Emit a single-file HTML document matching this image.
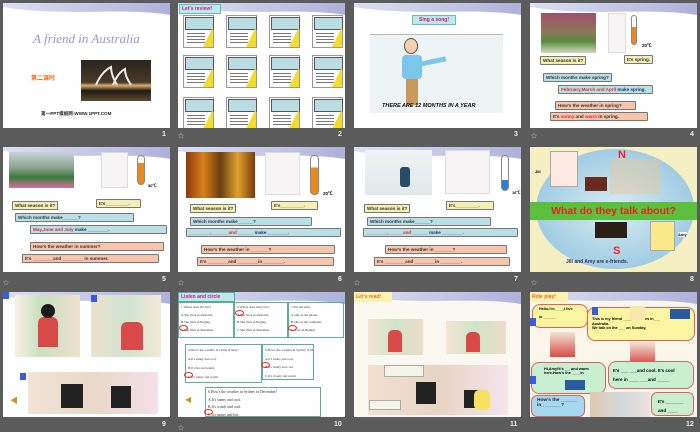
<!DOCTYPE html>
<html><head><meta charset="utf-8"><style>
*{margin:0;padding:0;box-sizing:border-box}
body{width:700px;height:431px;background:#5b5b5b;position:relative;overflow:hidden;font-family:"Liberation Sans","Noto Sans CJK SC",sans-serif}
.s{position:absolute;width:167px;height:125px;background:#fff;overflow:hidden}
.a{position:absolute}
.n{position:absolute;color:#eee;font-size:7px;font-weight:bold}
.st{position:absolute;color:#ccc;font-size:6px}
.b{position:absolute;font-size:4.6px;font-weight:bold;color:#333;border:1px solid #777;border-radius:1px;padding:0 2px;line-height:7px;white-space:nowrap}
.y{background:#f4efb4}.bl{background:#b9e0e6}.p{background:#f8c4ac}
.r{color:#e22}.nb{color:#236}
.cal{position:absolute;width:31px;height:33px;background:#fff;border:1px solid #999}
.cal:before{content:"";position:absolute;left:1px;top:1px;width:27px;height:11px;background:#b9dde0;border:1px solid #556}
.cal:after{content:"";position:absolute;right:0;bottom:0;border-left:10px solid transparent;border-bottom:20px solid #f4dc2a}
.cal i{position:absolute;left:3px;top:15px;width:18px;height:14px;background:repeating-linear-gradient(#fff 0 2px,#777 2px 3px)}
.ph{position:absolute}
.q{position:absolute;border:1px solid #5ab09a;padding:1px 2px;overflow:hidden;white-space:nowrap}
</style></head><body>
<svg width="0" height="0" style="position:absolute"><defs><linearGradient id="w" x1="0" x2="1"><stop offset="0" stop-color="#dcdff2"/><stop offset="1" stop-color="#aeb2dc"/></linearGradient></defs></svg>

<!-- Slide 1 -->
<div class="s" style="left:3px;top:3px">
<svg class="a" width="167" height="14" style="left:0;top:0"><path d="M0 0H167V12C120 4 60 14 0 4Z" fill="url(#w)"/></svg>
<div class="a" style="left:30px;top:28px;font:italic 13px 'Liberation Serif',serif;color:#9a9ac6">A friend in Australia</div>
<div class="a" style="left:28px;top:70px;font-size:6px;font-weight:bold;color:#f06a1a">第二课时</div>
<div class="ph" style="left:78px;top:57px;width:70px;height:41px;background:linear-gradient(#2a2420,#4a3a28 55%,#d8b070 62%,#201a14 75%,#5a4a30)"></div>
<svg class="a" style="left:88px;top:60px" width="50" height="22"><path d="M5 22C10 10 16 6 20 4C20 12 24 18 26 22M22 22C26 12 30 8 34 6C34 14 38 18 40 22" stroke="#eee" stroke-width="2" fill="none"/></svg>
<div class="a" style="left:38px;top:108px;font-size:4.6px;font-weight:bold;color:#222">第一PPT模板网-WWW.1PPT.COM</div>
</div>
<div class="n" style="left:162px;top:131px">1</div>

<!-- Slide 2 -->
<div class="s" style="left:178px;top:3px">
<svg class="a" width="167" height="14" style="left:0;top:0"><path d="M0 0H167V12C120 4 60 14 0 4Z" fill="url(#w)"/></svg>
<div class="a" style="left:1px;top:1px;width:42px;height:10px;background:#bfe8ec;border:1px solid #6bb;font-size:5px;font-weight:bold;color:#d0168e;line-height:8px;padding-left:2px">Let's review!</div>
<div class="cal" style="left:5px;top:12px"><i></i></div><div class="cal" style="left:48px;top:12px"><i></i></div><div class="cal" style="left:91px;top:12px"><i></i></div><div class="cal" style="left:134px;top:12px"><i></i></div>
<div class="cal" style="left:5px;top:52px"><i></i></div><div class="cal" style="left:48px;top:52px"><i></i></div><div class="cal" style="left:91px;top:52px"><i></i></div><div class="cal" style="left:134px;top:52px"><i></i></div>
<div class="cal" style="left:5px;top:94px"><i></i></div><div class="cal" style="left:48px;top:94px"><i></i></div><div class="cal" style="left:91px;top:94px"><i></i></div><div class="cal" style="left:134px;top:94px"><i></i></div>
</div>
<div class="st" style="left:178px;top:131px">☆</div><div class="n" style="left:338px;top:131px">2</div>

<!-- Slide 3 -->
<div class="s" style="left:354px;top:3px">
<svg class="a" width="167" height="14" style="left:0;top:0"><path d="M0 0H167V12C120 4 60 14 0 4Z" fill="url(#w)"/></svg>
<div class="a" style="left:58px;top:12px;width:44px;height:10px;background:#bfe8ec;border:1px solid #6bb;font-size:5px;font-weight:bold;color:#d0168e;line-height:8px;text-align:center">Sing a song!</div>
<div class="a" style="left:16px;top:31px;width:133px;height:79px;background:#eef3f6;border-top:1px solid #bbb"></div>
<div class="a" style="left:50px;top:35px;width:14px;height:16px;border-radius:50%;background:#f3d0b0;border:1px solid #555"></div>
<div class="a" style="left:48px;top:52px;width:20px;height:24px;background:#7cc6ea;border-radius:4px"></div>
<div class="a" style="left:66px;top:56px;width:26px;height:5px;background:#7cc6ea;transform:rotate(-12deg)"></div>
<div class="a" style="left:52px;top:76px;width:12px;height:26px;background:#c89a5a"></div>
<div class="a" style="left:28px;top:100px;font:italic bold 5.5px 'Liberation Sans',sans-serif;color:#111">THERE ARE 12 MONTHS IN A YEAR</div>
</div>
<div class="n" style="left:514px;top:131px">3</div>

<!-- Slide 4 -->
<div class="s" style="left:530px;top:3px">
<svg class="a" width="167" height="14" style="left:0;top:0"><path d="M0 0H167V12C120 4 60 14 0 4Z" fill="url(#w)"/></svg>
<div class="ph" style="left:11px;top:10px;width:55px;height:40px;background:linear-gradient(#a0506a,#8a7a5a 50%,#5a8a3a 70%,#cfd8c0)"></div>
<div class="a" style="left:78px;top:10px;width:18px;height:40px;background:#f6f4f4;border:1px solid #ddd"></div>
<div class="a" style="left:101px;top:12px;width:6px;height:30px;border:1px solid #888;border-radius:3px;background:linear-gradient(#fff 40%,#e88a20 40%)"></div>
<div class="a" style="left:112px;top:40px;font-size:4.5px;font-weight:bold">20℃</div>
<div class="b y" style="left:10px;top:53px">What season is it?</div>
<div class="b y" style="left:94px;top:52px">It's spring.</div>
<div class="b bl" style="left:13px;top:70px">Which months make spring?</div>
<div class="b bl" style="left:28px;top:82px;width:95px"><span class="r">February,March and April</span> <span class="nb">make spring.</span></div>
<div class="b p" style="left:25px;top:98px;width:81px">How's the weather in spring?</div>
<div class="b p" style="left:20px;top:109px;width:98px">It's <span class="r">sunny</span> and <span class="r">warm</span> in spring.</div>
</div>
<div class="st" style="left:531px;top:131px">☆</div><div class="n" style="left:690px;top:131px">4</div>

<!-- Slide 5 -->
<div class="s" style="left:3px;top:147px">
<svg class="a" width="167" height="14" style="left:0;top:0"><path d="M0 0H167V12C120 4 60 14 0 4Z" fill="url(#w)"/></svg>
<div class="ph" style="left:6px;top:5px;width:65px;height:36px;background:linear-gradient(#c8d4dc,#8aa08a 45%,#3a7a3a 70%,#d870a0)"></div>
<div class="a" style="left:98px;top:5px;width:27px;height:36px;background:#f6f4f4;border:1px solid #ddd"></div>
<div class="a" style="left:134px;top:8px;width:8px;height:30px;border:1px solid #888;border-radius:4px;background:linear-gradient(#fff 25%,#e88a20 25%)"></div>
<div class="a" style="left:145px;top:36px;font-size:4px;font-weight:bold">30℃</div>
<div class="b y" style="left:9px;top:54px">What season is it?</div>
<div class="b y" style="left:93px;top:52px;width:45px">It's_________.</div>
<div class="b bl" style="left:12px;top:66px;width:119px">Which months make______?</div>
<div class="b bl" style="left:27px;top:78px;width:137px"><span class="r">May,June and July</span> <span class="nb">make</span> ________.</div>
<div class="b p" style="left:27px;top:95px;width:134px">How's the weather in summer?</div>
<div class="b p" style="left:19px;top:107px;width:137px">It's ________and ________ in summer.</div>
</div>
<div class="st" style="left:3px;top:278px">☆</div><div class="n" style="left:162px;top:276px">5</div>

<!-- Slide 6 -->
<div class="s" style="left:178px;top:147px">
<svg class="a" width="167" height="14" style="left:0;top:0"><path d="M0 0H167V12C120 4 60 14 0 4Z" fill="url(#w)"/></svg>
<div class="ph" style="left:8px;top:5px;width:69px;height:46px;background:linear-gradient(90deg,#8a3a10,#d8801a,#6a4010,#e0a030,#7a3a0a)"></div>
<div class="a" style="left:87px;top:5px;width:35px;height:43px;background:#f6f4f4;border:1px solid #ddd"></div>
<div class="a" style="left:132px;top:8px;width:9px;height:40px;border:1px solid #888;border-radius:4px;background:linear-gradient(#fff 30%,#e88a20 30%)"></div>
<div class="a" style="left:145px;top:44px;font-size:4.5px;font-weight:bold">20℃</div>
<div class="b y" style="left:12px;top:57px">What season is it?</div>
<div class="b y" style="left:93px;top:54px;width:47px">It's_________.</div>
<div class="b bl" style="left:12px;top:70px;width:122px">Which months make______?</div>
<div class="b bl" style="left:8px;top:81px;width:155px;color:#e22">________,_______and ______ <span class="nb">make</span> <span style="color:#333">________.</span></div>
<div class="b p" style="left:23px;top:98px;width:134px">How's the weather in _______?</div>
<div class="b p" style="left:19px;top:110px;width:137px">It's ________and ________in ________.</div>
</div>
<div class="st" style="left:178px;top:278px">☆</div><div class="n" style="left:338px;top:276px">6</div>

<!-- Slide 7 -->
<div class="s" style="left:354px;top:147px">
<svg class="a" width="167" height="14" style="left:0;top:0"><path d="M0 0H167V12C120 4 60 14 0 4Z" fill="url(#w)"/></svg>
<div class="ph" style="left:11px;top:3px;width:67px;height:45px;background:linear-gradient(#f0f4f4,#e0e8ea)"></div>
<div class="a" style="left:46px;top:20px;width:10px;height:20px;background:#2a4a6a;border-radius:3px"></div>
<div class="a" style="left:91px;top:3px;width:45px;height:44px;background:#f6f4f4;border:1px solid #ddd"></div>
<div class="a" style="left:147px;top:8px;width:8px;height:36px;border:1px solid #888;border-radius:4px;background:linear-gradient(#fff 70%,#2a80d0 70%)"></div>
<div class="a" style="left:158px;top:43px;font-size:4px;font-weight:bold">16℃</div>
<div class="b y" style="left:10px;top:57px">What season is it?</div>
<div class="b y" style="left:92px;top:54px;width:48px">It's_________.</div>
<div class="b bl" style="left:13px;top:70px;width:124px">Which months make______?</div>
<div class="b bl" style="left:9px;top:81px;width:155px;color:#e22">________,______and ______ <span class="nb">make</span> <span style="color:#333">________.</span></div>
<div class="b p" style="left:31px;top:98px;width:122px">How's the weather in _______?</div>
<div class="b p" style="left:20px;top:110px;width:136px">It's ________and ________in ________.</div>
</div>
<div class="st" style="left:354px;top:278px">☆</div><div class="n" style="left:514px;top:276px">7</div>

<!-- Slide 8 -->
<div class="s" style="left:530px;top:147px;background:#f4f0c4">
<div class="a" style="left:6px;top:2px;width:158px;height:120px;border-radius:50%;background:radial-gradient(#d8ecf4,#8ac0dc)"></div>
<div class="a" style="left:80px;top:12px;width:50px;height:35px;background:#e8c8a0;opacity:.5"></div>
<div class="a" style="left:20px;top:4px;width:28px;height:36px;background:#fbe8e0;border:1px solid #aaa"></div>
<div class="a" style="left:5px;top:22px;font-size:4px;font-weight:bold">Jill</div>
<div class="a" style="left:55px;top:30px;width:22px;height:14px;background:#6a2a20"></div>
<div class="a" style="left:88px;top:2px;font-size:11px;font-weight:bold;color:#e22">N</div>
<div class="a" style="left:0;top:55px;width:167px;height:18px;background:#5cbf3e;color:#e8221a;font-size:10.5px;font-weight:bold;text-align:center;line-height:18px">What do they talk about?</div>
<div class="a" style="left:65px;top:75px;width:32px;height:16px;background:#2a2018"></div>
<div class="a" style="left:120px;top:74px;width:25px;height:30px;background:#fbe88a;border:1px solid #aaa"></div>
<div class="a" style="left:148px;top:85px;font-size:4px;font-weight:bold;background:#fff">Amy</div>
<div class="a" style="left:83px;top:98px;font-size:11px;font-weight:bold;color:#e22">S</div>
<div class="a" style="left:36px;top:112px;font-size:5px;font-weight:bold;color:#336">Jill and Amy  are e-friends.</div>
</div>
<div class="st" style="left:531px;top:278px">☆</div><div class="n" style="left:690px;top:276px">8</div>

<!-- Slide 9 -->
<div class="s" style="left:3px;top:292px">
<svg class="a" width="167" height="14" style="left:0;top:0"><path d="M0 0H167V12C120 4 60 14 0 4Z" fill="url(#w)"/></svg>
<div class="a" style="left:0;top:0;width:6px;height:7px;background:#3a5ae0"></div>
<div class="a" style="left:12px;top:3px;width:65px;height:62px;background:linear-gradient(90deg,#f8f0e4,#c8e0c0 40%,#f0e0d0)"></div>
<div class="a" style="left:35px;top:25px;width:20px;height:30px;background:#d84a48;border-radius:6px 6px 0 0"></div>
<div class="a" style="left:38px;top:12px;width:14px;height:14px;background:#1a1a1a;border-radius:50%"></div>
<div class="a" style="left:88px;top:3px;width:70px;height:62px;background:linear-gradient(90deg,#f0e0d0,#cfe4cf 50%,#f4e8d8)"></div>
<div class="a" style="left:88px;top:3px;width:6px;height:7px;background:#3a5ae0"></div>
<div class="a" style="left:118px;top:30px;width:22px;height:28px;background:#d84a48;border-radius:6px 6px 0 0"></div>
<div class="a" style="left:17px;top:81px;width:6px;height:7px;background:#3a5ae0"></div>
<div class="a" style="left:25px;top:80px;width:130px;height:42px;background:linear-gradient(90deg,#f2e4d4,#e8d8c8 50%,#f4e0e8)"></div>
<div class="a" style="left:58px;top:92px;width:22px;height:24px;background:#222"></div>
<div class="a" style="left:108px;top:94px;width:20px;height:22px;background:#222"></div>
<div class="a" style="left:7px;top:103px;font-size:8px;color:#c8961a">◀</div>
</div>
<div class="n" style="left:162px;top:421px">9</div>

<!-- Slide 10 -->
<div class="s" style="left:178px;top:292px;font-family:'Liberation Serif',serif;font-size:3.3px;color:#333">
<svg class="a" width="167" height="14" style="left:0;top:0"><path d="M0 0H167V12C120 4 60 14 0 4Z" fill="url(#w)"/></svg>
<div class="a" style="left:0;top:0;width:57px;height:10px;background:#bfe8ec;border:1px solid #5a9;font:bold 5px 'Liberation Sans',sans-serif;color:#d0168e;line-height:8px;padding-left:2px">Listen and circle</div>
<div class="q" style="left:0;top:10px;width:56px;height:36px;line-height:7.5px">1.Where does Jill live?<br>A.She lives in Australia.<br>B.She lives in Beijing.<br>C.She lives in Shenzhen.</div>
<div class="q" style="left:56px;top:10px;width:54px;height:36px;line-height:7.5px">2.Where does Amy live?<br>A.She lives in Australia.<br>B.She lives in Beijing.<br>C.She lives in Shenzhen.</div>
<div class="q" style="left:110px;top:10px;width:56px;height:36px;line-height:7.5px">3.Jill and Amy<br>A.talk on the phone.<br>B.talk on the computer.<br>C. Live in Beijing.</div>
<div class="q" style="left:7px;top:52px;width:77px;height:39px;line-height:9px">4.How's the weather in China in May?<br>A.It's sunny and cool.<br>B.It's hot and windy.<br>C.It's sunny and warm.</div>
<div class="q" style="left:84px;top:52px;width:52px;height:36px;line-height:8.5px">5.How's the weather in Sydney in May?<br>A.It's sunny and cool.<br>B.It's windy and cool.<br>C.It's cloudy and warm.</div>
<div class="q" style="left:27px;top:95px;width:116px;height:30px;line-height:7.5px;font-size:3.8px">6.How's the weather in Sydney in December?<br>A.It's sunny and cool.<br>B.It's windy and cool.<br>C.It's sunny and hot.</div>
<div class="a" style="left:1px;top:33px;width:9px;height:6px;border:1px solid #e22;border-radius:50%"></div>
<div class="a" style="left:57px;top:18px;width:9px;height:6px;border:1px solid #e22;border-radius:50%"></div>
<div class="a" style="left:110px;top:33px;width:9px;height:6px;border:1px solid #e22;border-radius:50%"></div>
<div class="a" style="left:6px;top:80px;width:9px;height:6px;border:1px solid #e22;border-radius:50%"></div>
<div class="a" style="left:83px;top:70px;width:9px;height:6px;border:1px solid #e22;border-radius:50%"></div>
<div class="a" style="left:26px;top:117px;width:9px;height:6px;border:1px solid #e22;border-radius:50%"></div>
<div class="a" style="left:7px;top:103px;font-size:8px;color:#c8961a">◀</div>
</div>
<div class="st" style="left:178px;top:423px">☆</div><div class="n" style="left:334px;top:421px">10</div>

<!-- Slide 11 -->
<div class="s" style="left:354px;top:292px;background:#fbf8f2">
<svg class="a" width="167" height="14" style="left:0;top:0"><path d="M0 0H167V12C120 4 60 14 0 4Z" fill="url(#w)"/></svg>
<div class="a" style="left:0;top:0;width:38px;height:10px;background:#fff2b0;font-size:5px;font-weight:bold;color:#f06a1a;line-height:10px;padding-left:2px">Let's read!</div>
<div class="a" style="left:14px;top:27px;width:55px;height:36px;background:linear-gradient(90deg,#f4e4d4,#d0e4c8 50%,#f0dcc8)"></div>
<div class="a" style="left:34px;top:38px;width:14px;height:22px;background:#d84a48;border-radius:5px 5px 0 0"></div>
<div class="a" style="left:92px;top:29px;width:60px;height:33px;background:linear-gradient(90deg,#f4e4d4,#d0e4c8 50%,#f0dcc8)"></div>
<div class="a" style="left:112px;top:40px;width:14px;height:20px;background:#d84a48;border-radius:5px 5px 0 0"></div>
<div class="a" style="left:14px;top:73px;width:140px;height:50px;background:linear-gradient(90deg,#f2e0d0,#e8d4c4 50%,#f4e4ec)"></div>
<div class="a" style="left:62px;top:90px;width:20px;height:22px;background:#222"></div>
<div class="a" style="left:110px;top:98px;width:18px;height:18px;background:#222"></div>
<div class="a" style="left:120px;top:98px;width:16px;height:20px;background:#f8e060;border-radius:5px"></div>
<div class="a" style="left:30px;top:73px;width:40px;height:12px;background:#f4f4e8;border:1px solid #aaa"></div>
<div class="a" style="left:15px;top:108px;width:32px;height:10px;background:#f4f4e8;border:1px solid #aaa"></div>
</div>
<div class="n" style="left:510px;top:421px">11</div>

<!-- Slide 12 -->
<div class="s" style="left:530px;top:292px;background:#faf6ec">
<svg class="a" width="167" height="14" style="left:0;top:0"><path d="M0 0H167V12C120 4 60 14 0 4Z" fill="url(#w)"/></svg>
<div class="a" style="left:0;top:0;width:38px;height:10px;background:#fff2b0;font-size:5px;font-weight:bold;color:#f06a1a;line-height:10px;padding-left:2px">Role play!</div>
<div class="a" style="left:2px;top:12px;width:56px;height:24px;background:#fbf4a0;border:1px solid #e06060;border-radius:8px;font-size:3.8px;font-weight:bold;padding:2px 6px">Hello,I'm____,I live<br><br>in ______</div>
<div class="a" style="left:57px;top:15px;width:108px;height:34px;background:#fbf4a0;border:1px solid #e06060;border-radius:8px;font-size:3.8px;font-weight:bold;padding:9px 4px;line-height:4.5px">This is my friend ____ She lives in___<br>Australia.<br>We talk on the ___ on Sunday.</div>
<div class="a" style="left:0;top:26px;width:6px;height:8px;background:#3a5ae0"></div>
<div class="a" style="left:62px;top:15px;width:6px;height:8px;background:#3a5ae0"></div>
<div class="a" style="left:100px;top:14px;width:15px;height:14px;background:#f8e8b0"></div>
<div class="a" style="left:140px;top:17px;width:20px;height:10px;background:#2a5aa0"></div>
<div class="a" style="left:20px;top:40px;width:25px;height:25px;background:linear-gradient(#f4e4d4,#d84a48)"></div>
<div class="a" style="left:100px;top:50px;width:25px;height:22px;background:linear-gradient(#f4e4d4,#d84a48)"></div>
<div class="a" style="left:1px;top:70px;width:75px;height:32px;background:#c8f0d0;border:1px solid #e06060;border-radius:8px;font-size:3.8px;font-weight:bold;padding:4px 6px 0 12px">Hi,Amy!It's___ and warm<br>here.How's the ____in</div>
<div class="a" style="left:0;top:84px;width:6px;height:8px;background:#3a5ae0"></div>
<div class="a" style="left:35px;top:88px;width:20px;height:10px;background:#2a5aa0"></div>
<div class="a" style="left:78px;top:69px;width:86px;height:28px;background:#c8f0d0;border:1px solid #e06060;border-radius:8px;font-size:4.5px;font-weight:bold;padding:4px 4px;line-height:9px">It's ___ ___and cool. It's cool<br>here in ____ ___and _____</div>
<div class="a" style="left:1px;top:103px;width:54px;height:22px;background:#a8d8f0;border:1px solid #e06060;border-radius:6px;font-size:4.8px;font-weight:bold;padding:2px 5px;color:#123">How's the ______<br>in_ ______?</div>
<div class="a" style="left:60px;top:100px;width:60px;height:25px;background:linear-gradient(90deg,#e0c8b0,#d0d8d8,#f0e0e0)"></div>
<div class="a" style="left:121px;top:100px;width:43px;height:24px;background:#c8f0d0;border:1px solid #e06060;border-radius:6px;font-size:4.6px;font-weight:bold;padding:4px 6px;line-height:9px">It's _______<br>and ____</div>
</div>
<div class="n" style="left:686px;top:421px">12</div>
</body></html>
